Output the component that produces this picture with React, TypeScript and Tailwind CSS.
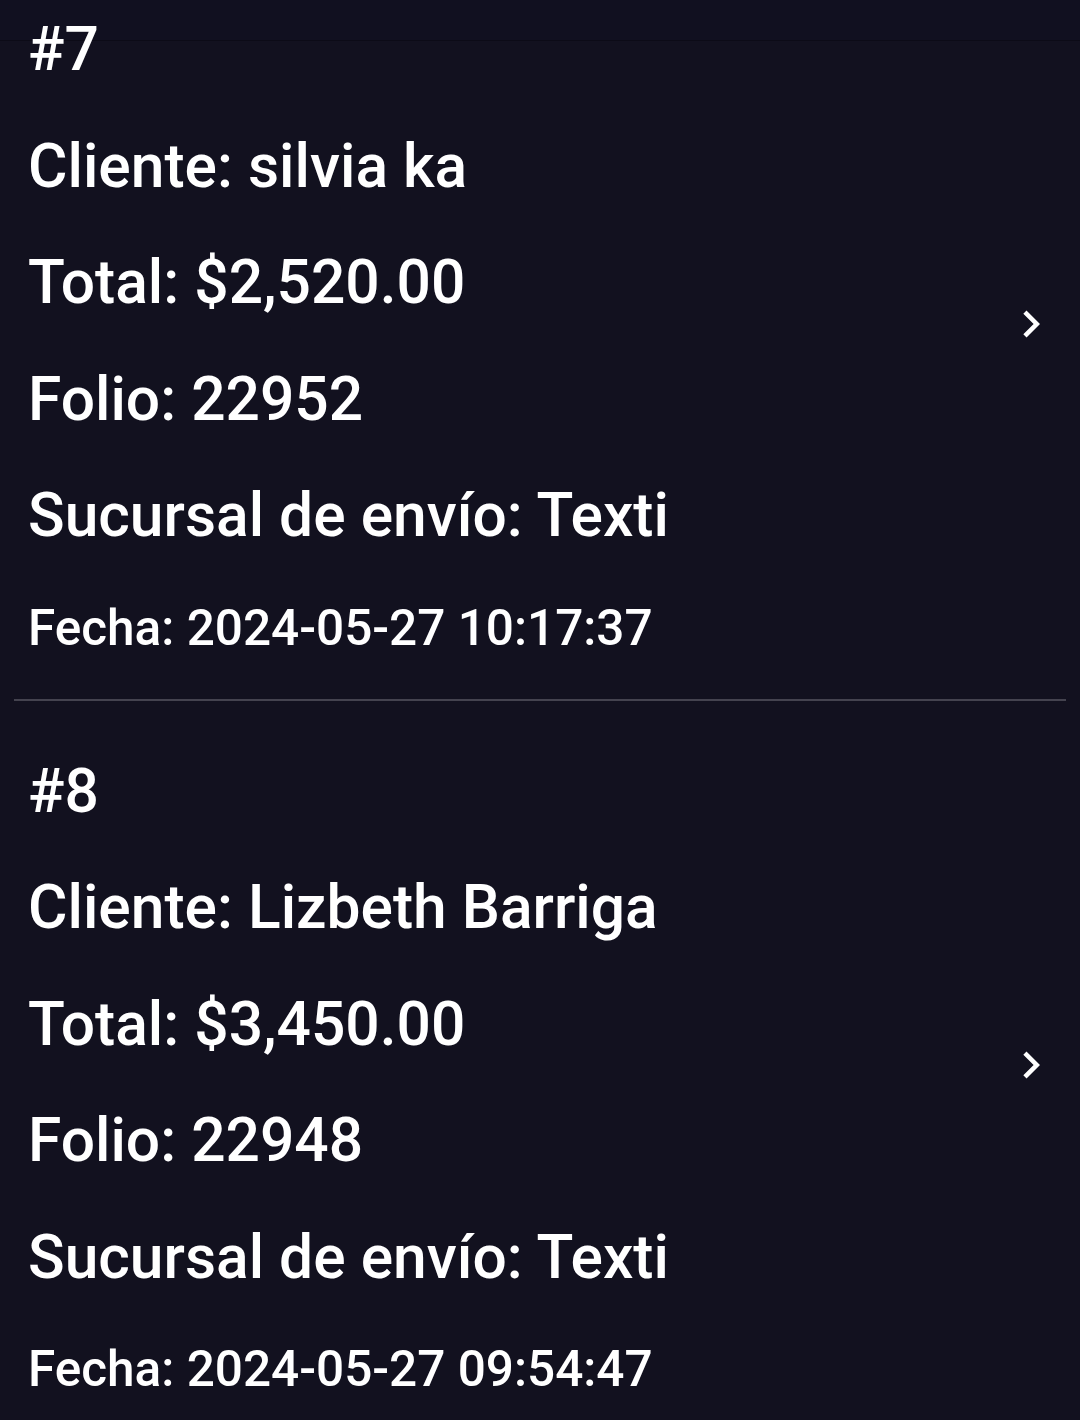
import React from "react";
import { MdChevronRight } from "react-icons/md";

type Pedido = {
  n: number;
  cliente: string;
  total: string;
  folio: string;
  sucursal: string;
  fecha: string;
};

const pedidos: Pedido[] = [
  { n: 7, cliente: "silvia ka", total: "$2,520.00", folio: "22952", sucursal: "Texti", fecha: "2024-05-27 10:17:37" },
  { n: 8, cliente: "Lizbeth Barriga", total: "$3,450.00", folio: "22948", sucursal: "Texti", fecha: "2024-05-27 09:54:47" },
];

function Item({ p }: { p: Pedido }) {
  return (
    <div>
      <div className="flex flex-row items-center pl-[28px] pr-[22px] pt-[61px] pb-[47px]">
        <div className="flex flex-1 flex-col gap-[56.5px] text-[60.5px] leading-[60px] font-medium text-white">
          <div>#{p.n}</div>
          <div>Cliente: {p.cliente}</div>
          <div>Total: {p.total}</div>
          <div>Folio: {p.folio}</div>
          <div>Sucursal de envío: {p.sucursal}</div>
          <div className="mt-[1px] text-[49.5px] leading-[48px]">Fecha: {p.fecha}</div>
        </div>
        <MdChevronRight className="mb-[24px] shrink-0 text-white" size={54} />
      </div>
      <div className="mx-[14px] h-[2px] bg-[#44434f]" />
    </div>
  );
}

export default function App() {
  return (
    <div
      className="relative h-[1420px] w-[1080px] overflow-hidden bg-[#12111f]"
      style={{ fontFamily: "Roboto, 'Noto Sans', sans-serif" }}
    >
      <div className="absolute left-0 right-0 top-0 h-[41px] border-b border-[#0c0b17] bg-[#111020]" />
      <div className="relative mt-[-41px]">
        {pedidos.map((p) => (
          <Item key={p.n} p={p} />
        ))}
      </div>
    </div>
  );
}
